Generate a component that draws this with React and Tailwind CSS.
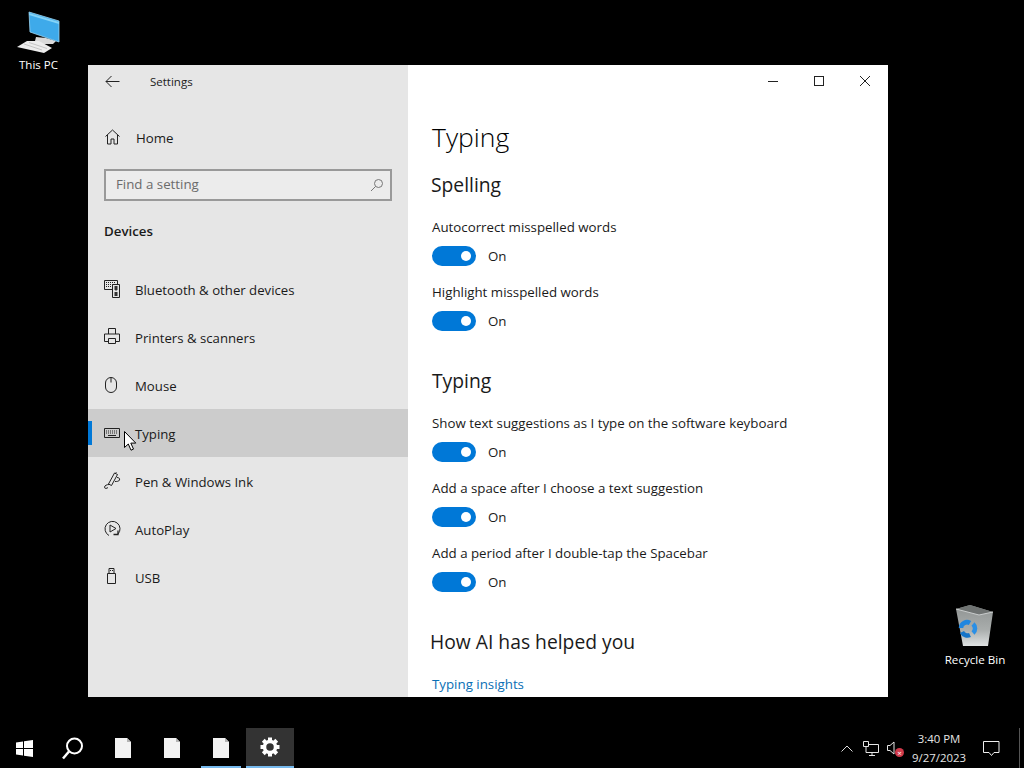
import React from 'react';

const Toggle = () => (
  <div className="flex items-center h-[20px]">
    <div className="relative w-[44px] h-[20px] rounded-full bg-[#0078d7]">
      <span className="absolute right-[5px] top-[5px] w-[10px] h-[10px] rounded-full bg-white" />
    </div>
    <span className="ml-[12px] pt-[2px] text-[13.3px] text-[#1a1a1a]">On</span>
  </div>
);

const Setting = ({ label, className }) => (
  <div className={className}>
    <div className="text-[13.3px] leading-[20px] text-[#1a1a1a]">{label}</div>
    <div className="mt-[9px]"><Toggle /></div>
  </div>
);

const iconProps = { width: 18, height: 18, viewBox: '0 0 18 18', fill: 'none', stroke: '#222', strokeWidth: 1 };

const DevicesIcon = () => (
  <svg {...iconProps}>
    <path d="M0.500 0.500h13v9h-13z" />
    <path d="M2 2.500h10M2 4.500h10M2 6.500h6" strokeDasharray="1 1" />
    <path d="M8.500 4.500h7v13h-7z" fill="#e6e6e6" />
    <path d="M10.500 6h3v4h-3zM10.500 12h3v4h-3z" fill="#333" stroke="none" />
    <path d="M11 10.500h2" stroke="#999" />
  </svg>
);
const PrinterIcon = () => (
  <svg {...iconProps}>
    <path d="M4.500 6V0.500h7V6M4.500 13.500h-4V6h15v7.500h-4" />
    <path d="M4.500 10.500h7v5h-7z" />
  </svg>
);
const MouseIcon = () => (
  <svg {...iconProps}>
    <rect x="1.500" y="1.500" width="11" height="15" rx="5.500" />
    <path d="M7 1.500v5" />
  </svg>
);
const KeyboardIcon = () => (
  <svg {...iconProps}>
    <path d="M0.500 4.500h15v9h-15z" />
    <path d="M2 7h12M2 9h12" strokeDasharray="1 1" />
    <path d="M4 11.500h8" />
  </svg>
);
const PenIcon = () => (
  <svg {...iconProps}>
    <path d="M10.500 1l3 1.500-6 11-3-1.500z" />
    <path d="M11 1.500l1.500-1" />
    <path d="M5 12.500c-2 0-4.500 1-4.500 2.700 0 1.800 2.500 1.300 3.500 0.300" />
    <path d="M13 5.500c2 0 3 1 2.500 2.500s-3 1.500-4.500 1.500" />
  </svg>
);
const AutoPlayIcon = () => (
  <svg {...iconProps}>
    <path d="M5 15.500A7.500 7.500 0 1 1 14 14" />
    <path d="M6 5l6 3.500-6 3.500z" />
    <path d="M14 10.500v4h-4.500" strokeWidth="1.300" />
  </svg>
);
const UsbIcon = () => (
  <svg {...iconProps}>
    <path d="M3.500 5.500h8v10h-8z" />
    <path d="M5 5.500v-5h5v5" />
    <path d="M6 2.500h1M8 2.500h1" />
  </svg>
);

const navItems = [
  { label: 'Bluetooth & other devices', Icon: DevicesIcon },
  { label: 'Printers & scanners', Icon: PrinterIcon },
  { label: 'Mouse', Icon: MouseIcon },
  { label: 'Typing', Icon: KeyboardIcon, active: true },
  { label: 'Pen & Windows Ink', Icon: PenIcon },
  { label: 'AutoPlay', Icon: AutoPlayIcon },
  { label: 'USB', Icon: UsbIcon },
];

const NavItem = ({ label, Icon, active }) => (
  <div className={`relative flex items-center h-[48px] pl-[16px] ${active ? 'bg-[#cccccc]' : ''}`}>
    {active && <span className="absolute left-0 top-[12px] w-[4px] h-[24px] bg-[#0078d7]" />}
    <Icon />
    <span className="ml-[13px] pt-[4px] text-[13.2px] text-[#1a1a1a]">{label}</span>
  </div>
);

const Sidebar = () => (
  <div className="w-[320px] shrink-0 bg-[#e6e6e6] flex flex-col">
    <div className="flex items-center h-[32px] pl-[17px]">
      <svg width="15" height="13" viewBox="0 0 15 13" fill="none" stroke="#222" strokeWidth="1">
        <path d="M14.500 6.500H1M6.500 1L1 6.500l5.500 5.500" />
      </svg>
      <span className="ml-[30px] pt-[1px] text-[11.5px] text-[#1a1a1a]">Settings</span>
    </div>
    <div className="flex items-center h-[48px] mt-[16px] pl-[17px]">
      <svg width="15" height="16" viewBox="0 0 15 16" fill="none" stroke="#222" strokeWidth="1">
        <path d="M0.500 7.500L7.500 1l7 6.500M2.500 6v9h3.500v-5h3v5h3.500V6" />
      </svg>
      <span className="ml-[16px] pt-[4px] text-[13.3px] text-[#1a1a1a]">Home</span>
    </div>
    <div className="mx-[16px] mt-[8px] h-[32px] border-2 border-[#999999] bg-[#ececec] flex items-center justify-between pl-[10px] pr-[6px]">
      <span className="text-[13.3px] text-[#6b6b6b]">Find a setting</span>
      <svg width="14" height="14" viewBox="0 0 14 14" fill="none" stroke="#777" strokeWidth="1">
        <circle cx="8.500" cy="5.500" r="4" />
        <path d="M5.500 8.500L1 13" />
      </svg>
    </div>
    <div className="ml-[16px] mt-[20px] text-[13.3px] leading-[20px] font-semibold text-[#1a1a1a]">Devices</div>
    <div className="mt-[24px]">
      {navItems.map((item) => <NavItem key={item.label} {...item} />)}
    </div>
  </div>
);

const Content = () => (
  <div className="relative flex-1 bg-white overflow-hidden pl-[24px]">
    <div className="absolute top-0 right-0 flex h-[32px]">
      <div className="w-[46px] flex items-center justify-center">
        <span className="w-[10px] h-px bg-[#222]" />
      </div>
      <div className="w-[46px] flex items-center justify-center">
        <span className="w-[10px] h-[10px] border border-[#222]" />
      </div>
      <div className="w-[46px] flex items-center justify-center">
        <svg width="12" height="12" viewBox="0 0 12 12" stroke="#222" strokeWidth="1"><path d="M1 1l10 10M11 1L1 11" /></svg>
      </div>
    </div>
    <h1 className="mt-[52px] text-[26.5px] leading-[40px] font-light text-[#000]">Typing</h1>
    <h2 className="mt-[14px] -ml-px text-[19.3px] leading-[28px] text-[#1a1a1a]">Spelling</h2>
    <Setting className="mt-[18px]" label="Autocorrect misspelled words" />
    <Setting className="mt-[16px]" label="Highlight misspelled words" />
    <h2 className="mt-[36px] text-[19.3px] leading-[28px] text-[#1a1a1a]">Typing</h2>
    <Setting className="mt-[18px]" label="Show text suggestions as I type on the software keyboard" />
    <Setting className="mt-[16px]" label="Add a space after I choose a text suggestion" />
    <Setting className="mt-[16px]" label="Add a period after I double-tap the Spacebar" />
    <h2 className="mt-[36px] -ml-[2px] text-[19.3px] leading-[28px] text-[#1a1a1a]">How AI has helped you</h2>
    <div className="mt-[18px] text-[13.3px] leading-[20px] text-[#0a6fb5]">Typing insights</div>
  </div>
);

const PcIcon = () => (
  <svg width="44" height="42" viewBox="0 0 44 42">
    <path d="M19 26l10 1 10 3-3 3H22l-4-3z" fill="#d9d9d9" />
    <path d="M12 1L42 10V31L13 21z" fill="#3eaaea" stroke="#9ad4f3" strokeWidth="0.800" />
    <path d="M12 2L42 11V13L12 4z" fill="#84d4f8" />
    <path d="M10 30L22 30 35 37 27 42 0 36z" fill="#ececec" />
    <path d="M7 33l18 6M12 31.500l18 6" stroke="#aaa" strokeWidth="0.600" />
  </svg>
);

const BinIcon = () => (
  <svg width="38" height="41" viewBox="0 0 38 41">
    <defs>
      <linearGradient id="binBody" x1="0" y1="0" x2="0" y2="1">
        <stop offset="0" stopColor="#8f9392" />
        <stop offset="0.6" stopColor="#a9adac" />
        <stop offset="1" stopColor="#dfe2e2" />
      </linearGradient>
    </defs>
    <path d="M0 4L14 0l23 7-5 34H7z" fill="url(#binBody)" />
    <path d="M0 4L14 0l23 7-14 3z" fill="#6f7372" />
    <path d="M0 4l23 6 14-3" fill="none" stroke="#c9cccc" strokeWidth="1" />
    <path d="M5 23a6 6 0 0 1 9-5" fill="none" stroke="#1f86e0" strokeWidth="4.500" />
    <path d="M17 19a6 6 0 0 1 0 9" fill="none" stroke="#2a8fe6" strokeWidth="4.500" />
    <path d="M14 30a6 6 0 0 1-8-3" fill="none" stroke="#1574c8" strokeWidth="4.500" />
  </svg>
);

const FileIcon = () => (
  <svg width="16" height="20" viewBox="0 0 16 20">
    <path d="M0 0h12l4 4v16H0z" fill="#f3f3f3" />
    <path d="M12 0l4 4h-4z" fill="#b5b5b5" />
  </svg>
);

const GearIcon = () => (
  <svg width="20" height="20" viewBox="0 0 20 20">
    <circle cx="10" cy="10" r="5.500" fill="none" stroke="#fff" strokeWidth="3.500" />
    {[0, 45, 90, 135, 180, 225, 270, 315].map((a) => (
      <rect key={a} x="8" y="0.500" width="4" height="4" fill="#fff" transform={`rotate(${a} 10 10)`} />
    ))}
  </svg>
);

const Taskbar = () => (
  <div className="h-[40px] bg-black flex items-stretch">
    <div className="w-[48px] flex items-center justify-center">
      <svg width="17" height="17" viewBox="0 0 17 17" fill="#fff">
        <path d="M0 2.500l7-1v6.500H0zM8 1.300L17 0v8H8zM0 9h7v6.500l-7-1zM8 9h9v8l-9-1.300z" />
      </svg>
    </div>
    <div className="w-[48px] flex items-center justify-center">
      <svg width="24" height="24" viewBox="0 0 24 24" fill="none" stroke="#fff" strokeWidth="2">
        <circle cx="14.500" cy="10" r="7.500" />
        <path d="M9 15.500L3 22.500" strokeWidth="2.500" />
      </svg>
    </div>
    <div className="w-[49px] ml-[2px] flex items-center justify-center"><FileIcon /></div>
    <div className="w-[49px] flex items-center justify-center"><FileIcon /></div>
    <div className="relative w-[49px] flex items-center justify-center">
      <FileIcon />
      <span className="absolute left-[5px] bottom-0 w-[40px] h-[2px] bg-[#76b9ed]" />
    </div>
    <div className="w-[48px] ml-px bg-[#333333] border-b-2 border-[#76b9ed] flex items-center justify-center">
      <GearIcon />
    </div>
    <div className="flex-1" />
    <div className="flex items-center pr-[4px]">
      <svg width="12" height="7" viewBox="0 0 12 7" fill="none" stroke="#ddd" strokeWidth="1"><path d="M0.500 6.500l5.500-5.500 5.500 5.500" /></svg>
      <svg className="ml-[10px]" width="16" height="15" viewBox="0 0 16 15" fill="none" stroke="#e5e5e5" strokeWidth="1">
        <path d="M3 3.500h12.500v8H3zM6 14.500h6M9 11.500v3" />
        <path d="M0.500 0.500h5v5h-5z" fill="#000" />
      </svg>
      <div className="relative ml-[8px] w-[17px] h-[15px]">
        <svg width="10" height="14" viewBox="0 0 10 14" fill="none" stroke="#e5e5e5" strokeWidth="1"><path d="M0.500 4.500h2.500l4-3.500v12l-4-3.500H0.500z" /></svg>
        <span className="absolute right-0 bottom-[-1px] w-[9px] h-[9px] rounded-full bg-[#d13a4b] text-white text-[8px] leading-[9px] text-center">×</span>
      </div>
      <div className="ml-[7px] w-[56px] text-center whitespace-nowrap text-[11.4px] leading-[19px] text-[#e5e5e5]">
        <div>3:40 PM</div>
        <div>9/27/2023</div>
      </div>
      <div className="w-[46px] pl-[2px] flex items-center justify-center">
        <svg width="17" height="17" viewBox="0 0 17 17" fill="none" stroke="#eee" strokeWidth="1"><path d="M0.500 1.500h15.500v11h-5l-2.500 3-2.500-3H0.500z" /></svg>
      </div>
      <span className="ml-[6px] w-px h-[40px] bg-[#555]" />
    </div>
  </div>
);

const Cursor = () => (
  <svg className="absolute left-[124px] top-[431px]" width="13" height="20" viewBox="0 0 13 20">
    <path d="M0.500 0.500v16l3.800-3.500 2.700 6.200 2.500-1.100-2.700-6h5z" fill="#fff" stroke="#000" strokeWidth="1" />
  </svg>
);

export default function App() {
  return (
    <div className="relative w-[1024px] h-[768px] bg-black overflow-hidden flex flex-col font-['Open_Sans',sans-serif]">
      <div className="relative h-[728px]">
        <div className="absolute left-[8px] top-[11px] w-[61px] flex flex-col items-center">
          <PcIcon />
          <span className="mt-[3px] text-[11.5px] text-white">This PC</span>
        </div>
        <div className="absolute left-[945px] top-[605px] w-[60px] flex flex-col items-center">
          <BinIcon />
          <span className="mt-[5px] text-[11.6px] whitespace-nowrap text-white">Recycle Bin</span>
        </div>
        <div className="absolute left-[88px] top-[65px] w-[800px] h-[632px] flex">
          <Sidebar />
          <Content />
        </div>
      </div>
      <Taskbar />
      <Cursor />
    </div>
  );
}
